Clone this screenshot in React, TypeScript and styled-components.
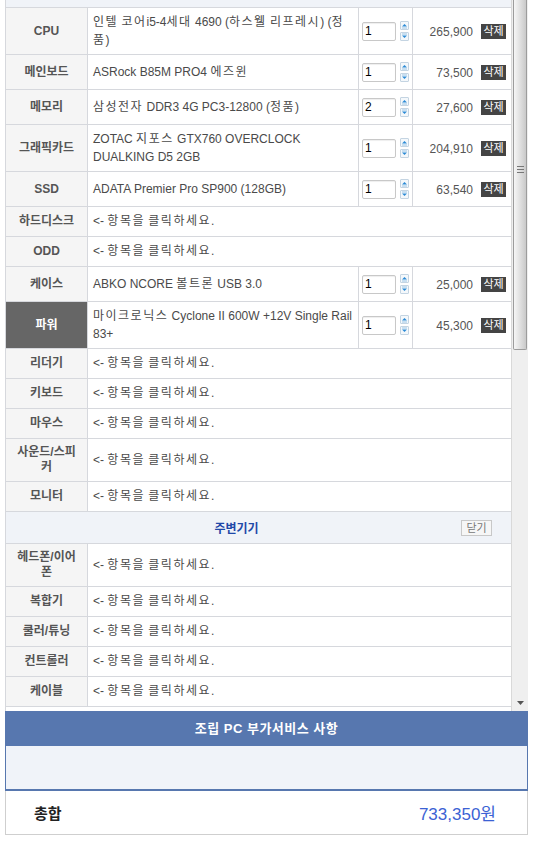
import styled, { createGlobalStyle } from 'styled-components';

const font = `"Liberation Sans", "Noto Sans CJK KR", sans-serif`;

const GlobalStyle = createGlobalStyle`
  body {
    margin: 0;
    background: #fff;
    font-family: ${font};
  }
`;

const Page = styled.div`
  width: 523px;
  margin-left: 5px;
`;

const ScrollBox = styled.div`
  display: flex;
  height: 711px;
  overflow: hidden;
`;

const TableArea = styled.div`
  width: 506px;
  box-sizing: border-box;
  border-left: 1px solid #d6d8dd;
  overflow: hidden;
`;

const TopStrip = styled.div`
  height: 7px;
  background: #f0f3f8;
  border-bottom: 1px solid #d6d8dd;
`;

const PartTable = styled.table`
  width: 505px;
  table-layout: fixed;
  border-collapse: separate;
  border-spacing: 0;
  font-size: 12px;
  color: #4a4a4a;
`;

const Cell = styled.td`
  box-sizing: border-box;
  border-right: 1px solid #d6d8dd;
  border-bottom: 1px solid #d6d8dd;
  padding: 5px 1px 5px 5px;
  line-height: 18px;
  vertical-align: middle;
  &:last-child {
    border-right: none;
  }
`;

const EmptyCell = styled(Cell)`
  padding-bottom: 6px;
`;

// Hangul in the original is set wider than the Latin text beside it
const Hangul = styled.span`
  letter-spacing: 1.5px;
`;

const LabelCell = styled(Cell)<{ $active?: boolean }>`
  padding: 6px 6px;
  text-align: center;
  font-weight: bold;
  line-height: 15px;
  word-break: break-all;
  background: ${(p) => (p.$active ? '#666' : '#f5f5f5')};
  color: ${(p) => (p.$active ? '#fff' : '#555')};
`;

const QtyCell = styled(Cell)`
  padding: 7px 0 7px 3px;
`;

const QtyWrap = styled.div`
  display: flex;
  align-items: center;
  gap: 4px;
`;

const QtyInput = styled.input`
  width: 34px;
  height: 19px;
  box-sizing: border-box;
  border: 1px solid #c8c8c8;
  border-radius: 2px;
  padding: 0 2px;
  font-family: ${font};
  font-size: 12px;
  color: #000;
  box-shadow: inset 0 1px 1px #eee;
`;

const Spinner = styled.div`
  display: flex;
  flex-direction: column;
  gap: 2px;
`;

const SpinButton = styled.span`
  display: block;
  width: 9px;
  height: 9px;
  box-sizing: border-box;
  border: 1px solid #c4d4e2;
  border-radius: 1px;
  background: #f4f8fb;
  svg {
    display: block;
  }
`;

const PriceCell = styled(Cell)`
  text-align: right;
  padding-right: 5px;
  white-space: nowrap;
`;

const Price = styled.span`
  vertical-align: middle;
  color: #555;
`;

const DeleteButton = styled.button`
  margin-left: 8px;
  width: 25px;
  height: 15px;
  padding: 0;
  border: 0;
  background: #444;
  color: #fff;
  font-family: ${font};
  font-size: 11px;
  line-height: 15px;
  vertical-align: middle;
`;

const SectionCell = styled.td`
  height: 31px;
  padding: 0;
  background: #f0f3f8;
  border-bottom: 1px solid #d6d8dd;
`;

const SectionBar = styled.div`
  display: flex;
  align-items: center;
`;

const SectionTitle = styled.div`
  flex: 1;
  padding-left: 6px;
  text-align: center;
  font-weight: bold;
  color: #1f48a8;
`;

const CloseButton = styled.button`
  width: 31px;
  height: 16px;
  margin-right: 19px;
  padding: 0;
  border: 1px solid #c8c8c8;
  background: #f6f6f6;
  color: #777;
  font-family: ${font};
  font-size: 11px;
  line-height: 14px;
`;

const ScrollBar = styled.div`
  width: 17px;
  box-sizing: border-box;
  border-left: 1px solid #d9d9d9;
  background: #efefef;
  display: flex;
  flex-direction: column;
  align-items: center;
`;

const Thumb = styled.div`
  width: 14px;
  height: 350px;
  box-sizing: border-box;
  border: 1px solid #9c9c9c;
  border-top: none;
  border-radius: 0 0 2px 2px;
  background: linear-gradient(to right, #f6f6f6, #dedede 55%, #c9c9c9);
  display: flex;
  align-items: center;
  justify-content: center;
`;

const Grip = styled.div`
  width: 7px;
  height: 5px;
  margin-top: -10px;
  border-top: 1px solid #777;
  border-bottom: 1px solid #777;
  background: linear-gradient(#777, #777) center / 100% 1px no-repeat;
`;

const DownArrow = styled.div`
  margin-top: auto;
  margin-bottom: 6px;
  svg {
    display: block;
  }
`;

const ServiceHeader = styled.div`
  height: 35px;
  line-height: 35px;
  background: #5777af;
  color: #fff;
  font-size: 13px;
  font-weight: bold;
  letter-spacing: 0.5px;
  text-align: center;
`;

const ServiceBox = styled.div`
  height: 43px;
  background: #f0f3f9;
  border: 1px solid #5777af;
  border-top: none;
  border-bottom-width: 2px;
`;

const TotalBox = styled.div`
  height: 44px;
  box-sizing: border-box;
  display: flex;
  align-items: center;
  justify-content: space-between;
  padding: 0 31px 0 28px;
  border: 1px solid #cfcfcf;
  border-top: none;
`;

const TotalLabel = styled.span`
  font-size: 15px;
  font-weight: bold;
  color: #222;
`;

const TotalValue = styled.span`
  font-size: 17px;
  color: #3b62d4;
`;

interface Part {
  label: string;
  name?: string;
  qty?: number;
  price?: number;
  active?: boolean;
}

const parts: Part[] = [
  { label: 'CPU', name: '인텔 코어i5-4세대 4690 (하스웰 리프레시) (정품)', qty: 1, price: 265900 },
  { label: '메인보드', name: 'ASRock B85M PRO4 에즈윈', qty: 1, price: 73500 },
  { label: '메모리', name: '삼성전자 DDR3 4G PC3-12800 (정품)', qty: 2, price: 27600 },
  { label: '그래픽카드', name: 'ZOTAC 지포스 GTX760 OVERCLOCK DUALKING D5 2GB', qty: 1, price: 204910 },
  { label: 'SSD', name: 'ADATA Premier Pro SP900 (128GB)', qty: 1, price: 63540 },
  { label: '하드디스크' },
  { label: 'ODD' },
  { label: '케이스', name: 'ABKO NCORE 볼트론 USB 3.0', qty: 1, price: 25000 },
  { label: '파워', name: '마이크로닉스 Cyclone II 600W +12V Single Rail 83+', qty: 1, price: 45300, active: true },
  { label: '리더기' },
  { label: '키보드' },
  { label: '마우스' },
  { label: '사운드/스피커' },
  { label: '모니터' },
];

const peripherals: Part[] = [
  { label: '헤드폰/이어폰' },
  { label: '복합기' },
  { label: '쿨러/튜닝' },
  { label: '컨트롤러' },
  { label: '케이블' },
];

const fmt = (n: number) => n.toLocaleString('ko-KR');

const hangulRun = /([\uAC00-\uD7A3]+)/;

function Text({ children }: { children: string }) {
  return (
    <>
      {children.split(hangulRun).map((s, i) =>
        hangulRun.test(s) ? <Hangul key={i}>{s}</Hangul> : s
      )}
    </>
  );
}

function Spin() {
  return (
    <Spinner>
      <SpinButton>
        <svg width="7" height="7" viewBox="0 0 7 7">
          <path d="M1 4.5 L3.5 2 L6 4.5 Z" fill="#2b8ad6" />
          <rect x="1" y="5.5" width="5" height="1" fill="#9cc6e8" />
        </svg>
      </SpinButton>
      <SpinButton>
        <svg width="7" height="7" viewBox="0 0 7 7">
          <rect x="1" y="0.5" width="5" height="1" fill="#9cc6e8" />
          <path d="M1 2.5 L6 2.5 L3.5 5 Z" fill="#2b8ad6" />
        </svg>
      </SpinButton>
    </Spinner>
  );
}

function PartRow({ label, name, qty, price, active }: Part) {
  if (!name) {
    return (
      <tr>
        <LabelCell>{label}</LabelCell>
        <EmptyCell colSpan={3}>
          <Text>{'<- 항목을 클릭하세요.'}</Text>
        </EmptyCell>
      </tr>
    );
  }
  return (
    <tr>
      <LabelCell $active={active}>{label}</LabelCell>
      <Cell>
        <Text>{name}</Text>
      </Cell>
      <QtyCell>
        <QtyWrap>
          <QtyInput defaultValue={qty} />
          <Spin />
        </QtyWrap>
      </QtyCell>
      <PriceCell>
        <Price>{fmt(price ?? 0)}</Price>
        <DeleteButton>삭제</DeleteButton>
      </PriceCell>
    </tr>
  );
}

export default function App() {
  const total = parts.reduce((sum, p) => sum + (p.price ?? 0) * (p.qty ?? 0), 0);

  return (
    <Page>
      <GlobalStyle />
      <ScrollBox>
        <TableArea>
          <TopStrip />
          <PartTable>
            <colgroup>
              <col style={{ width: 82 }} />
              <col style={{ width: 271 }} />
              <col style={{ width: 54 }} />
              <col style={{ width: 98 }} />
            </colgroup>
            <tbody>
              {parts.map((p) => (
                <PartRow key={p.label} {...p} />
              ))}
              <tr>
                <SectionCell colSpan={4}>
                  <SectionBar>
                    <SectionTitle>주변기기</SectionTitle>
                    <CloseButton>닫기</CloseButton>
                  </SectionBar>
                </SectionCell>
              </tr>
              {peripherals.map((p) => (
                <PartRow key={p.label} {...p} />
              ))}
            </tbody>
          </PartTable>
        </TableArea>
        <ScrollBar>
          <Thumb>
            <Grip />
          </Thumb>
          <DownArrow>
            <svg width="7" height="4" viewBox="0 0 7 4">
              <path d="M0 0 L7 0 L3.5 4 Z" fill="#555" />
            </svg>
          </DownArrow>
        </ScrollBar>
      </ScrollBox>
      <ServiceHeader>조립 PC 부가서비스 사항</ServiceHeader>
      <ServiceBox />
      <TotalBox>
        <TotalLabel>총합</TotalLabel>
        <TotalValue>{fmt(total)}원</TotalValue>
      </TotalBox>
    </Page>
  );
}
